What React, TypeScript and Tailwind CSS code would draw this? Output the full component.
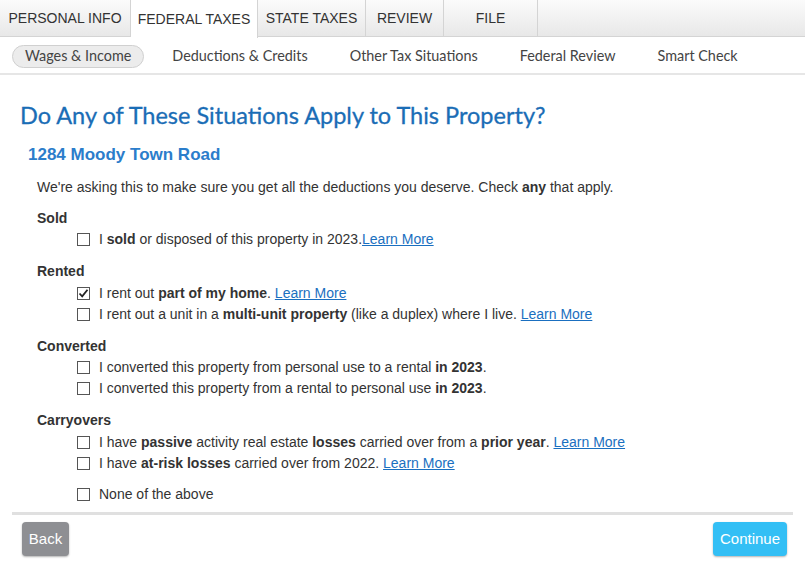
import React from "react"

const tabs = [
  { label: "PERSONAL INFO", w: "w-[131px]" },
  { label: "FEDERAL TAXES", w: "w-[127px]", active: true },
  { label: "STATE TAXES", w: "w-[108px]" },
  { label: "REVIEW", w: "w-[78px]" },
  { label: "FILE", w: "w-[94px]" },
]

const subTabs = ["Deductions & Credits", "Other Tax Situations", "Federal Review", "Smart Check"]

function Box({ checked }: { checked?: boolean }) {
  return (
    <span className="w-[13px] h-[13px] border border-[#555] bg-white flex items-center justify-center shrink-0">
      {checked && (
        <svg width="11" height="11" viewBox="0 0 11 11">
          <path d="M1.5 5.5 L4.2 8.3 L9.5 1.8" stroke="#222" strokeWidth="1.8" fill="none" />
        </svg>
      )}
    </span>
  )
}

function Row({ checked, children }: { checked?: boolean; children: React.ReactNode }) {
  return (
    <div className="flex items-center h-[21px] pl-[77px]">
      <Box checked={checked} />
      <span className="ml-[9px]">{children}</span>
    </div>
  )
}

function Learn() {
  return <a className="text-[#1a6fc0] underline cursor-pointer">Learn More</a>
}

function Section({ title, children }: { title: string; children: React.ReactNode }) {
  return (
    <div className="mb-[10.5px]">
      <div className="font-bold pl-[37px] h-[22px] flex items-center">{title}</div>
      {children}
    </div>
  )
}

export default function App() {
  return (
    <div className="w-[805px] h-[571px] bg-white text-[#333] font-['Liberation_Sans',Arial,sans-serif] text-[14px] overflow-hidden">
      <div className="flex h-[37px] bg-gradient-to-b from-[#fbfbfb] to-[#e8e8e8] border-b border-[#d4d4d4]">
        {tabs.map((t) => (
          <div
            key={t.label}
            className={`${t.w} flex items-center justify-center border-r border-[#d4d4d4] text-[14px] ${
              t.active ? "bg-white h-[38px] relative z-10" : ""
            }`}
          >
            {t.label}
          </div>
        ))}
      </div>

      <div className="flex items-center h-[38px] pt-[2px] border-b-2 border-[#e6e6e6] font-['Lato',sans-serif] text-[14.4px] leading-[20px] text-[#444]">
        <div className="ml-[12px] h-[23px] px-[12px] rounded-full bg-[#ececec] border border-[#d0d0d0] flex items-center">
          Wages &amp; Income
        </div>
        {subTabs.map((s, i) => (
          <div key={s} className={i === 0 ? "ml-[28px]" : "ml-[42px]"}>
            {s}
          </div>
        ))}
      </div>

      <h1 className="font-['Lato',sans-serif] text-[#1a6db6] text-[23.5px] leading-[28px] ml-[20px] mt-[26px] [-webkit-text-stroke:0.3px_#1a6db6]">
        Do Any of These Situations Apply to This Property?
      </h1>
      <h2 className="text-[#2b7dcb] font-bold text-[17px] leading-[22px] ml-[28px] mt-[15px]">1284 Moody Town Road</h2>

      <p className="ml-[37px] mt-[11px] leading-[20px]">
        We're asking this to make sure you get all the deductions you deserve. Check <b>any</b> that apply.
      </p>

      <div className="mt-[10px]">
        <Section title="Sold">
          <Row>
            I <b>sold</b> or disposed of this property in 2023.<Learn />
          </Row>
        </Section>
        <Section title="Rented">
          <Row checked>
            I rent out <b>part of my home</b>. <Learn />
          </Row>
          <Row>
            I rent out a unit in a <b>multi-unit property</b> (like a duplex) where I live. <Learn />
          </Row>
        </Section>
        <Section title="Converted">
          <Row>
            I converted this property from personal use to a rental <b>in 2023</b>.
          </Row>
          <Row>
            I converted this property from a rental to personal use <b>in 2023</b>.
          </Row>
        </Section>
        <Section title="Carryovers">
          <Row>
            I have <b>passive</b> activity real estate <b>losses</b> carried over from a <b>prior year</b>. <Learn />
          </Row>
          <Row>
            I have <b>at-risk losses</b> carried over from 2022. <Learn />
          </Row>
        </Section>
        <div className="mt-[1px]">
          <Row>None of the above</Row>
        </div>
      </div>

      <div className="mx-[12px] mt-[7px] border-t-[3px] border-[#e0e0e0]" />

      <div className="flex justify-between items-center px-[22px] pr-[18px] mt-[7px]">
        <button className="h-[34px] w-[47px] rounded-[4px] bg-[#8e8f93] text-white font-['Liberation_Sans_Narrow','Liberation_Sans',sans-serif] text-[15px] shadow-[0_1px_2px_rgba(0,0,0,0.3)]">
          Back
        </button>
        <button className="h-[34px] w-[74px] rounded-[4px] bg-[#33bff5] text-white font-['Liberation_Sans_Narrow','Liberation_Sans',sans-serif] text-[15px] shadow-[0_1px_2px_rgba(0,0,0,0.3)]">
          Continue
        </button>
      </div>
    </div>
  )
}
